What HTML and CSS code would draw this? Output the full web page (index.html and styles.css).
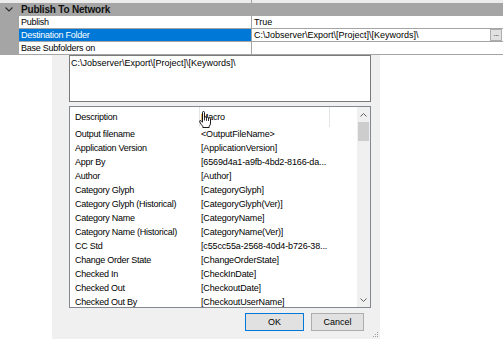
FILE: index.html
```html
<!DOCTYPE html>
<html>
<head>
<meta charset="utf-8">
<link rel="stylesheet" href="styles.css">
</head>
<body>
<div class="pg">
  <div class="pg-strip"><div class="gut-l"></div><div class="strip-n"></div><div class="strip-v"></div></div>
  <div class="pg-cat">
    <svg class="chev" width="8" height="5" viewBox="0 0 8 5"><polyline points="0.5,0.5 4,4 7.5,0.5" fill="none" stroke="#2b2b2b" stroke-width="1.1"/></svg>
    <span class="cat-title">Publish To Network</span>
  </div>
  <div class="pg-row"><div class="gut"></div><div class="name">Publish</div><div class="val">True</div></div>
  <div class="pg-row sel"><div class="gut"></div><div class="name">Destination Folder</div><div class="val"><span>C:\Jobserver\Export\[Project]\[Keywords]\</span><span class="ell">...</span></div></div>
  <div class="pg-row"><div class="gut"></div><div class="name">Base Subfolders on</div><div class="val"></div></div>
</div>
<div class="below">
  <div class="side"></div>
  <div class="dlg">
    <div class="tb">C:\Jobserver\Export\[Project]\[Keywords]\</div>
    <div class="lst">
      <div class="lst-body">
        <div class="lh">
          <div class="c1">Description</div>
          <div class="c2">Macro
            <svg class="hand" width="13" height="17" viewBox="0 0 13 17"><path d="M3.5 9 V1.5 Q3.5 0.5 4.5 0.5 Q5.5 0.5 5.5 1.5 V6.2 Q6.5 5.6 7.5 6.2 Q8.5 5.9 9.5 6.9 Q10.6 6.6 11.5 7.6 V12 Q11.5 14 10.2 15.3 V16.5 H3.8 V15.3 Q2.2 13.8 0.7 10.8 Q0.4 9.2 1.9 9.6 L3.5 11.2 Z" fill="#fff" stroke="#000" stroke-width="0.9" stroke-linejoin="round"/><path d="M5.5 6.2 V9.5 M7.5 6.2 V9.8 M9.5 6.9 V10" stroke="#000" stroke-width="0.8" fill="none"/></svg>
          </div>
          <div class="c3"></div>
        </div>
        <div class="lr"><div class="c1">Output filename</div><div class="c2">&lt;OutputFileName&gt;</div></div>
        <div class="lr"><div class="c1">Application Version</div><div class="c2">[ApplicationVersion]</div></div>
        <div class="lr"><div class="c1">Appr By</div><div class="c2">[6569d4a1-a9fb-4bd2-8166-da...</div></div>
        <div class="lr"><div class="c1">Author</div><div class="c2">[Author]</div></div>
        <div class="lr"><div class="c1">Category Glyph</div><div class="c2">[CategoryGlyph]</div></div>
        <div class="lr"><div class="c1">Category Glyph (Historical)</div><div class="c2">[CategoryGlyph(Ver)]</div></div>
        <div class="lr"><div class="c1">Category Name</div><div class="c2">[CategoryName]</div></div>
        <div class="lr"><div class="c1">Category Name (Historical)</div><div class="c2">[CategoryName(Ver)]</div></div>
        <div class="lr"><div class="c1">CC Std</div><div class="c2">[c55cc55a-2568-40d4-b726-38...</div></div>
        <div class="lr"><div class="c1">Change Order State</div><div class="c2">[ChangeOrderState]</div></div>
        <div class="lr"><div class="c1">Checked In</div><div class="c2">[CheckInDate]</div></div>
        <div class="lr"><div class="c1">Checked Out</div><div class="c2">[CheckoutDate]</div></div>
        <div class="lr"><div class="c1">Checked Out By</div><div class="c2">[CheckoutUserName]</div></div>
      </div>
      <div class="vs">
        <div class="arr"><svg width="7" height="4" viewBox="0 0 7 4"><polyline points="0.5,3.5 3.5,0.5 6.5,3.5" fill="none" stroke="#606060" stroke-width="1"/></svg></div>
        <div class="thumb"></div>
        <div class="track"></div>
        <div class="arr"><svg width="7" height="4" viewBox="0 0 7 4"><polyline points="0.5,0.5 3.5,3.5 6.5,0.5" fill="none" stroke="#606060" stroke-width="1"/></svg></div>
      </div>
    </div>
    <div class="btns">
      <button class="btn ok">OK</button>
      <button class="btn cancel">Cancel</button>
    </div>
    <svg class="grip" width="7" height="7" viewBox="0 0 7 7"><g fill="#a0a0a0"><rect x="5" y="1" width="1" height="1"/><rect x="3" y="3" width="1" height="1"/><rect x="5" y="3" width="1" height="1"/><rect x="1" y="5" width="1" height="1"/><rect x="3" y="5" width="1" height="1"/><rect x="5" y="5" width="1" height="1"/></g></svg>
  </div>
  <div class="side-r"></div>
</div>
</body>
</html>
```
FILE: styles.css
```css
* { box-sizing: border-box; }
html, body { margin: 0; padding: 0; }
body {
  width: 503px;
  height: 339px;
  overflow: hidden;
  background: #fff;
  font-family: "Liberation Sans", Arial, sans-serif;
  font-size: 9px;
  color: #000;
}

/* property grid */
.pg { display: flex; flex-direction: column; }
.pg-strip {
  height: 3px;
  display: grid;
  grid-template-columns: 19px 232px 252px;
  background: #ececec;
}
.strip-v { border-left: 1px solid #a5a5a5; }
.pg-cat {
  height: 13px;
  background: #a5a5a5;
  display: flex;
  align-items: center;
}
.chev { margin-left: 5px; flex: none; }
.cat-title {
  margin-left: 8px;
  font-weight: bold;
  font-size: 10px;
  letter-spacing: -0.2px;
  line-height: 13px;
  color: #111;
}
.pg-row {
  display: grid;
  grid-template-columns: 19px 232px 252px;
  height: 13px;
  border-bottom: 1px solid #a5a5a5;
}
.gut { background: #a5a5a5; }
.name {
  padding-left: 2px;
  line-height: 12px;
  letter-spacing: -0.25px;
  white-space: nowrap;
  overflow: hidden;
}
.val {
  border-left: 1px solid #a5a5a5;
  padding-left: 2px;
  line-height: 12px;
  display: flex;
  align-items: center;
  white-space: nowrap;
}
.sel .name { background: #0078d7; color: #fff; }
.ell {
  margin-left: auto;
  margin-right: 1px;
  width: 12px;
  height: 12px;
  background: #e1e1e1;
  border: 1px solid #adadad;
  font-size: 8px;
  line-height: 7px;
  text-align: center;
  letter-spacing: -0.5px;
  color: #222;
}

/* area below */
.below { display: flex; height: 284px; }
.side { width: 52px; flex: none; }
.side-r { flex: 1; }
.dlg {
  width: 328px;
  flex: none;
  background: #f0f0f0;
  padding: 0 9px 0 17px;
  display: flex;
  flex-direction: column;
  position: relative;
}
.tb {
  height: 47px;
  background: #fff;
  border: 1px solid #7a7a7a;
  padding: 1px 0 0 1px;
  line-height: 12px;
  white-space: nowrap;
}
.lst {
  margin-top: 4px;
  height: 202px;
  border: 1px solid #828790;
  background: #fff;
  display: flex;
}
.lst-body { flex: 1; overflow: hidden; }
.lh { display: flex; height: 20px; }
.lh .c1, .lh .c2 {
  width: 130px;
  border-right: 1px solid #e5e5e5;
  line-height: 20px;
  letter-spacing: -0.25px;
  white-space: nowrap;
}
.lh .c1 { padding-left: 5px; }
.lh .c2 { padding-left: 1px; position: relative; }
.hand { position: absolute; left: -1px; top: 4px; }
.lr { display: flex; height: 14px; line-height: 14px; white-space: nowrap; }
.lr .c1 { width: 130px; padding-left: 5px; letter-spacing: -0.25px; }
.lr .c2 { padding-left: 1px; letter-spacing: -0.15px; }

.vs {
  width: 13px;
  flex: none;
  background: #f0f0f0;
  display: flex;
  flex-direction: column;
  align-items: center;
}
.arr {
  height: 15px;
  width: 100%;
  display: flex;
  align-items: center;
  justify-content: center;
}
.thumb { width: 11px; height: 19px; background: #cdcdcd; }
.track { flex: 1; }

.btns {
  display: flex;
  justify-content: flex-end;
  gap: 7px;
  margin-top: 5px;
  padding-right: 7px;
}
.btn {
  height: 18px;
  padding: 0;
  border: 1px solid #adadad;
  background: #e1e1e1;
  font-family: "Liberation Sans", Arial, sans-serif;
  font-size: 9px;
  color: #000;
}
.ok { width: 59px; border-color: #0078d7; }
.cancel { width: 53px; }
.grip { position: absolute; right: 1px; bottom: 1px; }
```
